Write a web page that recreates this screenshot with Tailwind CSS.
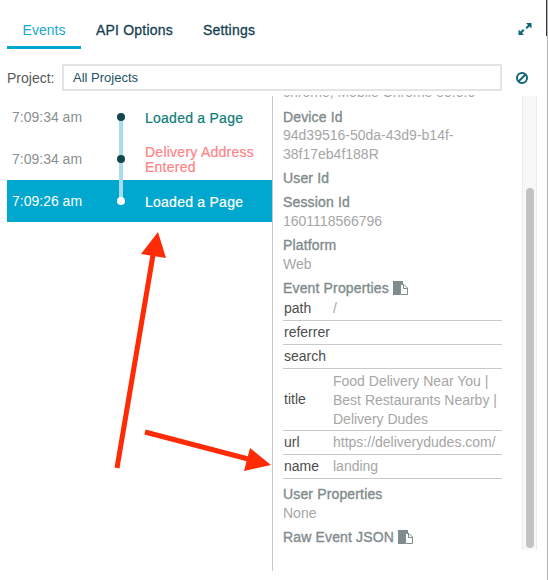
<!DOCTYPE html>
<html lang="en">
<head>
  <meta charset="UTF-8" />
  <title>Events</title>
  <script src="https://cdn.jsdelivr.net/npm/@tailwindcss/browser@4"></script>
</head>
<body class="bg-white">
  <div class="relative w-[548px] h-[580px] overflow-hidden border-r border-[#b4b4b4] font-['Liberation_Sans',sans-serif] text-[14px]">

    <!-- window edge, darker at the top -->
    <div class="absolute right-0 top-0 w-[1px] h-[36px] bg-[#333333]"></div>

    <!-- tabs -->
    <nav class="h-[64px] pt-[21px] pl-[7px] pr-[15px] flex items-start">
      <a class="w-[74px] h-[28px] border-b-[3px] border-[#00a7cf] text-center text-[#1aa9d0] leading-[18px]">Events</a>
      <a class="ml-[15px] text-[#16404f] leading-[18px] tracking-[0.2px] [-webkit-text-stroke:0.3px_#16404f]">API Options</a>
      <a class="ml-[30px] text-[#16404f] leading-[18px] tracking-[0.2px] [-webkit-text-stroke:0.3px_#16404f]">Settings</a>
      <svg class="ml-auto mt-[1px]" width="14" height="14" viewBox="0 0 14 14" fill="#0f6678">
        <path d="M8 1h5.500v5.500l-2-2-2.500 2.500-1.500-1.500 2.500-2.500z" />
        <path d="M6 13H0.500V7.500l2 2 2.500-2.500 1.500 1.500-2.500 2.500z" />
      </svg>
    </nav>

    <!-- project filter -->
    <div class="h-[27px] pl-[7px] flex items-center">
      <label class="w-[55px] text-[#595959] leading-[18px]">Project:</label>
      <div class="w-[440px] h-[27px] border-2 border-[#e4e4e4] pl-[9px] text-[13px] leading-[23px] text-[#1d5263]">All Projects</div>
      <svg class="ml-[13px]" width="14" height="14" viewBox="0 0 14 14" fill="none" stroke="#0f6678" stroke-width="2">
        <circle cx="7" cy="7" r="5" />
        <path d="M3.500 10.500l7-7" />
      </svg>
    </div>

    <!-- body -->
    <div class="flex pl-[7px] mt-[5px] h-[475px]">

      <!-- event list -->
      <div class="relative w-[265px] h-[126px] shrink-0">
        <div class="absolute left-[112px] top-[21px] w-[4px] h-[84px] bg-[#a9dcea]"></div>

        <div class="relative h-[42px] flex items-center">
          <span class="w-[138px] pl-[5px] text-[#8a8f91]">7:09:34 am</span>
          <span class="pt-[2px] tracking-[0.25px] text-[#0d7c78] [-webkit-text-stroke:0.2px_#0d7c78]">Loaded a Page</span>
          <i class="absolute left-[110px] top-[17px] w-[8px] h-[8px] rounded-full bg-[#12474d]"></i>
        </div>
        <div class="relative h-[42px] flex items-center">
          <span class="w-[138px] pl-[5px] text-[#8a8f91]">7:09:34 am</span>
          <span class="w-[120px] pt-[2px] leading-[15px] tracking-[0.25px] text-[#ff8286] [-webkit-text-stroke:0.2px_#ff8286]">Delivery Address Entered</span>
          <i class="absolute left-[110px] top-[17px] w-[8px] h-[8px] rounded-full bg-[#12474d]"></i>
        </div>
        <div class="relative h-[42px] flex items-center bg-[#00a7cf] text-white">
          <span class="w-[138px] pl-[5px]">7:09:26 am</span>
          <span class="pt-[2px] tracking-[0.25px] [-webkit-text-stroke:0.2px_#fff]">Loaded a Page</span>
          <div class="absolute left-[112px] top-0 w-[4px] h-[18px] bg-[#a9dcea]"></div>
          <i class="absolute left-[110px] top-[17px] w-[8px] h-[8px] rounded-full bg-white"></i>
        </div>
      </div>

      <!-- detail panel -->
      <div class="w-[275px] h-[475px] shrink-0 border-l border-[#c8c8c8] flex items-start">
        <div class="w-[249px] h-[455px] shrink-0 -mt-[1px] overflow-hidden pl-[10px] pr-[20px] leading-[18.7px] text-[#a6a6a6]">
          <p class="-mt-[12px] whitespace-nowrap">chrome, Mobile Chrome 80.0.0</p>

          <h4 class="mt-[6px] tracking-[0.15px] text-[#7f8b8c] [-webkit-text-stroke:0.35px_#7f8b8c]">Device Id</h4>
          <p class="w-[190px]">94d39516-50da-43d9-b14f-38f17eb4f188R</p>

          <h4 class="mt-[5.300px] tracking-[0.15px] text-[#7f8b8c] [-webkit-text-stroke:0.35px_#7f8b8c]">User Id</h4>

          <h4 class="mt-[5.300px] tracking-[0.15px] text-[#7f8b8c] [-webkit-text-stroke:0.35px_#7f8b8c]">Session Id</h4>
          <p>1601118566796</p>

          <h4 class="mt-[5.300px] tracking-[0.15px] text-[#7f8b8c] [-webkit-text-stroke:0.35px_#7f8b8c]">Platform</h4>
          <p>Web</p>

          <h4 class="mt-[5.300px] tracking-[0.15px] text-[#7f8b8c] [-webkit-text-stroke:0.35px_#7f8b8c] flex items-center gap-[4px]">Event Properties
            <svg width="15" height="14" viewBox="0 0 15 14"><path d="M0 0h10v3H7v11H0z" fill="#7f8b8c" /><path d="M7.500 3.500h3.500l3.500 3.500v6.500h-7z" fill="#fff" stroke="#7f8b8c" /><path d="M10.500 3.500v4h4" fill="none" stroke="#7f8b8c" /></svg>
          </h4>

          <table class="w-[219px] -mt-[1px] border-collapse">
            <tbody>
              <tr class="border-b border-[#c9c9c9] h-[24px]">
                <td class="w-[50px] pl-[1px] text-[#4d4d4d]">path</td>
                <td>/</td>
              </tr>
              <tr class="border-b border-[#c9c9c9] h-[24px]">
                <td class="pl-[1px] text-[#4d4d4d]">referrer</td>
                <td></td>
              </tr>
              <tr class="border-b border-[#c9c9c9] h-[24px]">
                <td class="pl-[1px] text-[#4d4d4d]">search</td>
                <td></td>
              </tr>
              <tr class="border-b border-[#c9c9c9] h-[62px]">
                <td class="pl-[1px] text-[#4d4d4d]">title</td>
                <td class="pt-[2px]">Food Delivery Near You | Best Restaurants Nearby | Delivery Dudes</td>
              </tr>
              <tr class="border-b border-[#c9c9c9] h-[24px]">
                <td class="pl-[1px] text-[#4d4d4d]">url</td>
                <td>https://deliverydudes.com/</td>
              </tr>
              <tr class="border-b border-[#c9c9c9] h-[24px]">
                <td class="pl-[1px] text-[#4d4d4d]">name</td>
                <td>landing</td>
              </tr>
            </tbody>
          </table>

          <h4 class="mt-[6.600px] tracking-[0.15px] text-[#7f8b8c] [-webkit-text-stroke:0.35px_#7f8b8c]">User Properties</h4>
          <p>None</p>

          <h4 class="mt-[5.300px] tracking-[0.15px] text-[#7f8b8c] [-webkit-text-stroke:0.35px_#7f8b8c] flex items-center gap-[4px]">Raw Event JSON
            <svg width="15" height="14" viewBox="0 0 15 14"><path d="M0 0h10v3H7v11H0z" fill="#7f8b8c" /><path d="M7.500 3.500h3.500l3.500 3.500v6.500h-7z" fill="#fff" stroke="#7f8b8c" /><path d="M10.500 3.500v4h4" fill="none" stroke="#7f8b8c" /></svg>
          </h4>
        </div>

        <!-- scrollbar -->
        <div class="w-[15px] h-[454px] shrink-0 bg-[#f8f8f8] border-x border-[#ececec] pt-[92px] pl-[3px]">
          <div class="w-[8px] h-[360px] rounded-full bg-[#c2c2c2]"></div>
        </div>
      </div>
    </div>

    <!-- annotation arrows -->
    <svg class="absolute left-0 top-0 pointer-events-none" width="548" height="580" viewBox="0 0 548 580">
      <path d="M117 468L153 255" stroke="#ff2b06" stroke-width="5" fill="none" />
      <path d="M158 232L166 258L141 254z" fill="#ff2b06" />
      <path d="M145 432L252 460" stroke="#ff2b06" stroke-width="5" fill="none" />
      <path d="M271 465L244 471L250 448z" fill="#ff2b06" />
    </svg>
  </div>
</body>
</html>
